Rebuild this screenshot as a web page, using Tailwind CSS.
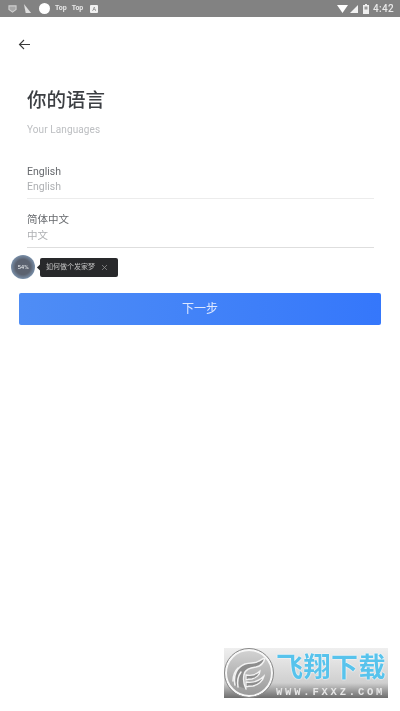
<!doctype html>
<html>
<head>
<meta charset="utf-8">
<script src="https://cdn.jsdelivr.net/npm/@tailwindcss/browser@4"></script>
</head>
<body class="bg-white">
<div class="relative w-[400px] h-[711px] overflow-hidden bg-white blur-[0.35px] font-['Roboto','Noto_Sans_CJK_SC',sans-serif]">
  <!-- status bar -->
  <div class="h-[17px] bg-[#828282] flex items-center pl-[8px] pr-[6px] text-[#e8e8e8]">
    <svg class="w-[9px] h-[8px] mr-[6px]" viewBox="0 0 10 9"><path d="M1 1h8v4L5 8 1 5z" fill="#a8a8a8" stroke="#d0d0d0" stroke-width="1.200"/></svg>
    <svg class="w-[9px] h-[10px] mr-[7px]" viewBox="0 0 10 11"><path d="M1 0l8 10H3z" fill="#dedede"/></svg>
    <div class="w-[11px] h-[11px] rounded-full bg-white mr-[5px]"></div>
    <span class="text-[7px] font-bold mr-[5px] leading-none">Top</span>
    <span class="text-[7px] font-bold mr-[7px] leading-none">Top</span>
    <div class="w-[8px] h-[8px] bg-[#f0f0f0] rounded-[1px] flex items-center justify-center"><span class="text-[6px] leading-none text-[#777]">A</span></div>
    <div class="flex-1"></div>
    <svg class="w-[11px] h-[8px] mr-[2px]" viewBox="0 0 11 8"><path d="M0 0h11L5.500 8z" fill="#fff"/></svg>
    <svg class="w-[8px] h-[8px] mr-[5px]" viewBox="0 0 8 8"><path d="M8 0v8H0z" fill="#f2f2f2"/></svg>
    <svg class="w-[6px] h-[10px] mr-[4px]" viewBox="0 0 6 10"><path d="M2 0h2v1h2v9H0V1h2z" fill="#eee"/><path d="M1.500 2.500h3v3h-3z" fill="#999"/></svg>
    <span class="text-[10px] font-medium leading-none tracking-[0.3px]">4:42</span>
  </div>

  <!-- back -->
  <div class="pl-[18px] pt-[22px] h-[58px]">
    <svg class="w-[13px] h-[11px]" viewBox="0 0 13 11" fill="none" stroke="#3a3a3a" stroke-width="1.100"><path d="M12 5.500H1.500M6 1L1.500 5.500 6 10"/></svg>
  </div>

  <!-- heading -->
  <div class="px-[27px]">
    <h1 class="text-[19.500px] leading-[28px] font-medium text-[#3c3f43] h-[28px] mt-[12px]">你的语言</h1>
    <p class="text-[10px] leading-[14px] text-[#bcbec1] mt-[8px] tracking-[0.1px]">Your Languages</p>
  </div>

  <!-- languages -->
  <div class="ml-[27px] mr-[26px] mt-[27px]">
    <div class="h-[35px] border-b border-[#ececec]">
      <p class="text-[10.500px] leading-[15px] text-[#66696d]">English</p>
      <p class="text-[10.500px] leading-[15px] text-[#aeb0b3]">English</p>
    </div>
    <div class="h-[49px] border-b border-[#dedede] pt-[13px]">
      <p class="text-[10.500px] leading-[15px] text-[#66696d]">简体中文</p>
      <p class="text-[10.500px] leading-[15px] mt-[1px] text-[#aeb0b3]">中文</p>
    </div>
  </div>

  <!-- floating ball and tip -->
  <div class="flex items-center ml-[11px] mt-[7px] h-[24px]">
    <div class="w-[24px] h-[24px] rounded-full bg-[radial-gradient(circle,#5b6270_45%,#7f98b4_75%,#9aa6b3)] flex items-center justify-center">
      <span class="text-[6px] leading-none text-[#eef0f2]">54%</span>
    </div>
    <div class="relative ml-[5px] w-[78px] h-[19px] bg-[#28292b] rounded-[2px] flex items-center pl-[6px] text-[#c4c4c4]">
      <div class="absolute left-[-2px] top-[7px] w-[5px] h-[5px] rotate-45 bg-[#28292b]"></div>
      <span class="text-[7px] leading-none">如何做个发家梦</span>
      <svg class="w-[5px] h-[5px] ml-[7px]" viewBox="0 0 5 5" stroke="#9a9a9a" stroke-width="0.700"><path d="M0 0l5 5M5 0L0 5"/></svg>
    </div>
  </div>

  <!-- button -->
  <div class="mx-[19px] mt-[14px] h-[32px] rounded-[2px] bg-gradient-to-r from-[#4f8df5] to-[#3577fb] flex items-center justify-center">
    <span class="text-[12px] leading-none text-[#dfe9ff]">下一步</span>
  </div>

  <!-- watermark -->
  <div class="absolute left-[224px] top-[648px] w-[164px] h-[50px] bg-gradient-to-b from-[#efefef] via-[#cfcfcf] via-[70%] to-[#6e6e6e]">
    <div class="absolute left-[1px] top-[1px] w-[48px] h-[48px] rounded-full bg-gradient-to-b from-[#d2d2d2] to-[#9a9a9a] border-[2px] border-[#f7f7f7] outline outline-[#8a8a8a] overflow-hidden">
      <svg class="w-full h-full" viewBox="0 0 44 44" fill="none" stroke-linecap="round">
        <path d="M8 34C6 24 10 16 18 13c6-2 10 0 14-3 2-1 4-3 6-3-1 4-4 8-9 9-6 1-11 2-12 8-1 5 0 10 2 14" fill="#8d8d8d" stroke="#f2f2f2" stroke-width="1.500"/>
        <path d="M6 30c0-6 2-10 5-13M11 36c-1-6 0-11 3-15" stroke="#f2f2f2" stroke-width="1.500"/>
        <path d="M19 24c5 1 10 0 14-4 0 4-4 7-8 8-2 0-4 0-6 1z" fill="#8d8d8d" stroke="#f2f2f2" stroke-width="1.300"/>
        <path d="M19 31c6 1 13-1 18-6-1 5-6 9-11 10-3 0-5 0-7 1z" fill="#8d8d8d" stroke="#f2f2f2" stroke-width="1.300"/>
      </svg>
    </div>
    <div class="absolute left-[52px] top-[4px] w-[110px] text-[27px] leading-[32px] font-bold text-[#58c3ec] tracking-[0.5px] whitespace-nowrap [text-shadow:0_0_1.500px_#fff,0_0_1.500px_#fff]">飞翔下载</div>
    <div class="absolute left-[52px] top-[38px] text-[10.500px] leading-[12px] font-bold text-[#e6e6e6] tracking-[2.800px] whitespace-nowrap font-['Liberation_Mono',monospace]">WWW.FXXZ.COM</div>
  </div>
</div>
</body>
</html>
